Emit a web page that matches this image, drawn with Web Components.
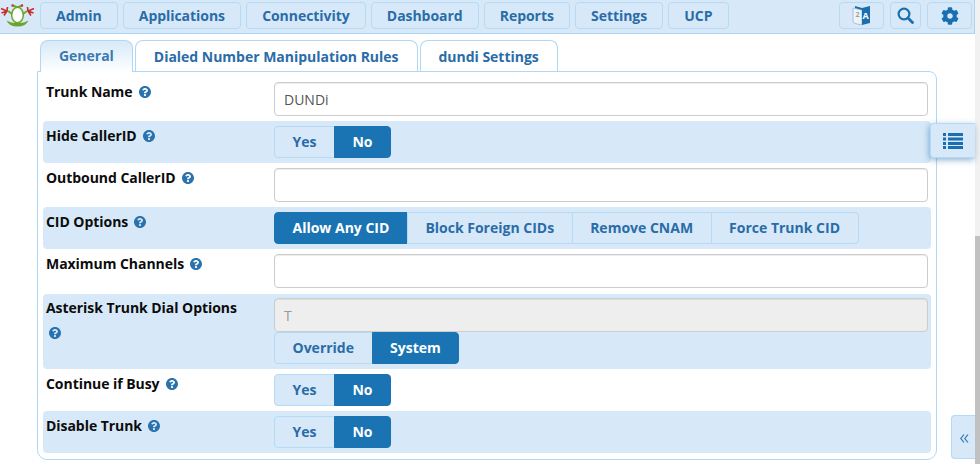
<!DOCTYPE html>
<html><head><meta charset="utf-8">
<style>
html,body{margin:0;padding:0;height:464px;overflow:hidden;background:#fff;font-family:"Open Sans",sans-serif}
</style></head><body>
<template id="t-page"><style>
:host{display:flex;height:464px;width:980px;position:relative}
.main{width:975px;flex:none;display:flex;flex-direction:column;position:relative}
.bar{width:5px;flex:none;background:#f1f1f1;display:flex;flex-direction:column}
.bar i{display:block;margin-top:236px;flex:1;background:#c1c1c1}
.content{padding:6px 38px 0 37px;display:flex;flex-direction:column}
</style><div class="main"><slot name="nav"></slot><div class="content"><slot></slot></div><slot name="over"></slot></div><div class="bar"><i></i></div></template>

<template id="t-nav"><style>
:host{display:flex;background:#d7e9f8;border-bottom:1px solid #a9d4f2;border-right:1px solid #a9d4f2;align-items:flex-start;padding-top:2px;height:31px}
.logo{width:40px;flex:none;height:28px;margin-top:-2px}
.l,.r{display:flex;gap:5px}
.sp{flex:1}
.r{margin-right:2px;gap:6px}
</style><div class="logo"><slot name="logo"></slot></div><div class="l"><slot></slot></div><div class="sp"></div><div class="r"><slot name="right"></slot></div></template>

<template id="t-navbtn"><style>
:host{display:flex;align-items:center;justify-content:center;box-sizing:border-box;height:27px;padding:0 15.1px;border:1px solid #b4daf5;border-radius:4px;background:#d7e9f8;color:#2a6ca8;font:700 14px/1 "Open Sans",sans-serif;letter-spacing:-.05px}
</style><slot></slot></template>

<template id="t-tabs"><style>
:host{display:flex;gap:2px;padding-left:3px;height:32px;position:relative;z-index:1;align-items:flex-start}
</style><slot></slot></template>

<template id="t-tab"><style>
:host{display:flex;align-items:center;justify-content:center;box-sizing:border-box;height:31px;padding:1px 18px 0;border:1px solid #b0d8f4;border-bottom:0;border-radius:8px 8px 0 0;background:#fff;color:#2a6ca8;font:700 14px/1 "Open Sans",sans-serif;letter-spacing:-.02px}
:host([active]){height:32px;background:linear-gradient(#d7e9f8,#fff);color:#3a7ab3;padding:0 18px 1px}
</style><slot></slot></template>

<template id="t-panel"><style>
:host{display:flex;flex-direction:column;box-sizing:border-box;border:1px solid #b0d8f4;border-radius:0 8px 10px 10px;padding:7px 5px 6px 5px;height:389px;margin-top:-1px;width:900px}
</style><slot></slot></template>

<template id="t-row"><style>
:host{display:grid;grid-template-columns:231px 654px;box-sizing:border-box;height:var(--h,42px);border-radius:4px;margin-bottom:var(--mb,0);color:#0c0c0c}
:host([shade]){background:#d7e9f8}
.lab{padding:var(--lt,5px) 0 0 3px;font:700 14px/20px "Open Sans",sans-serif;letter-spacing:-.05px;box-sizing:border-box}
.ctl{display:flex;flex-direction:column;align-items:flex-start;padding-top:var(--pt,5px)}
</style><div class="lab"><slot name="label"></slot></div><div class="ctl"><slot></slot></div></template>

<template id="t-help"><style>
:host{display:inline-block;width:12px;height:12px;margin-left:6px;vertical-align:-1px}
:host([block]){display:block;margin:9px 0 0 3px}
svg{display:block;width:12px;height:12px}
</style><svg viewBox="8 8 496 496"><path fill="#2a72ae" d="M504 256c0 136.997-111.043 248-248 248S8 392.997 8 256C8 119.083 119.043 8 256 8s248 111.083 248 248zM262.655 90c-54.497 0-89.255 22.957-116.549 63.758-3.536 5.286-2.353 12.415 2.715 16.258l34.699 26.31c5.205 3.947 12.621 3.008 16.665-2.122 17.864-22.658 30.113-35.797 57.303-35.797 20.429 0 45.698 13.148 45.698 32.958 0 14.976-12.363 22.667-32.534 33.976C247.128 238.528 216 254.941 216 296v4c0 6.627 5.373 12 12 12h56c6.627 0 12-5.373 12-12v-1.333c0-28.462 83.186-29.647 83.186-106.667 0-58.002-60.165-102-116.531-102zM256 338c-25.365 0-46 20.635-46 46 0 25.364 20.635 46 46 46s46-20.636 46-46c0-25.365-20.635-46-46-46z"/></svg></template>

<template id="t-input"><style>
:host{display:flex;align-items:center;box-sizing:border-box;width:654px;height:34px;border:1px solid #ccc;border-radius:4px;background:#fff;padding:1px 9px 0;font:400 14px/1 "Open Sans",sans-serif;color:#555;box-shadow:inset 0 1px 1px rgba(0,0,0,.075)}
:host([disabled]){background:#eee;color:#999}
</style><slot></slot></template>

<template id="t-seg"><style>
:host{display:inline-flex;height:32px}
</style><slot></slot></template>

<template id="t-opt"><style>
:host{display:flex;align-items:center;justify-content:center;box-sizing:border-box;height:32px;padding:0 17.5px;border:1px solid #b4daf5;margin-left:-1px;background:#d7e9f8;color:#2a6ca8;font:700 14px/1 "Open Sans",sans-serif}
:host(:first-child){margin-left:0;border-radius:4px 0 0 4px}
:host(:last-child){border-radius:0 4px 4px 0}
:host([on]){background:#1a73b3;border-color:#1a73b3;color:#fff}
</style><slot></slot></template>

<template id="t-side"><style>
:host{position:absolute;right:0;top:123px;width:45px;height:35px;box-sizing:border-box;border:1px solid #b4daf5;border-right:0;border-radius:4px 0 0 4px;background:#d7e9f8;display:flex;align-items:center;justify-content:center;box-shadow:-1px 2px 6px rgba(42,114,174,.55)}
</style><slot></slot></template>

<template id="t-collapse"><style>
:host{position:absolute;right:0;top:415px;width:24px;height:44px;box-sizing:border-box;border:1px solid #b4daf5;border-right:0;border-radius:4px 0 0 4px;background:#d7e9f8;display:flex;align-items:center;justify-content:center;color:#2a72ae;padding:2px 0 0 2px}
</style><slot></slot></template>

<x-page>
  <x-nav slot="nav">
    <svg slot="logo" width="36" height="28" viewBox="0 0 36 28">
      <path d="M6.500 20.500Q12 24 17.500 22.500Q23 24 28.500 20.500Q26 26.500 17.500 26.500Q9 26.500 6.500 20.500Z" fill="#6aa52c"/>
      <path d="M13 5.500L16 7L19 7L22 5.500" fill="none" stroke="#6aa52c" stroke-width="2"/>
      <ellipse cx="17.500" cy="15" rx="5.800" ry="7.800" fill="#fff" stroke="#6aa52c" stroke-width="1.500"/>
      <path d="M12 14L8 11M23 14L27 11" stroke="#6aa52c" stroke-width="1.600"/>
      <path d="M1 8.500L7 11L4 15.500M7.500 7L7 11L1.500 13M34 8.500L28 11L31 15.500M27.500 7L28 11L33.500 13" stroke="#cc2a2a" stroke-width="1.600" fill="none"/>
      <circle cx="12.500" cy="5.500" r="1.200" fill="#c33"/><circle cx="22" cy="5.500" r="1.200" fill="#c33"/>
    </svg>
    <x-navbtn>Admin</x-navbtn><x-navbtn>Applications</x-navbtn><x-navbtn>Connectivity</x-navbtn><x-navbtn>Dashboard</x-navbtn><x-navbtn>Reports</x-navbtn><x-navbtn>Settings</x-navbtn><x-navbtn>UCP</x-navbtn>
    <x-navbtn slot="right" style="width:45px;padding:0">
      <svg width="19" height="21" viewBox="0 0 19 21"><path d="M1 3L10 5V20L3 18.500Q1 18 1 16Z" fill="#eef3f8" stroke="#9fb4c8" stroke-width=".8"/><path d="M3 1L10 3L18 1V18L10 20V5L3 3Z" fill="#1a6fb0"/><text x="10.500" y="14" font-family="Open Sans" font-weight="700" font-size="9" fill="#fff">A</text><text x="3.500" y="12" font-family="Open Sans" font-size="7" fill="#8aa">2</text></svg>
    </x-navbtn>
    <x-navbtn slot="right" style="width:31px;padding:0">
      <svg width="17" height="17" viewBox="0 0 17 17"><circle cx="7" cy="7" r="5.400" fill="none" stroke="#1a6fb0" stroke-width="2.200"/><path d="M11 11L15.500 15.500" stroke="#1a6fb0" stroke-width="2.800" stroke-linecap="round"/></svg>
    </x-navbtn>
    <x-navbtn slot="right" style="width:45px;padding:0">
      <svg width="18" height="18" viewBox="0 0 512 512"><path fill="#1a6fb0" d="M487.4 315.7l-42.6-24.6c4.3-23.2 4.3-47 0-70.2l42.6-24.6c4.9-2.8 7.1-8.6 5.5-14-11.1-35.6-30-67.8-54.7-94.6-3.8-4.1-10-5.1-14.8-2.3L380.8 110c-17.9-15.4-38.5-27.3-60.8-35.1V25.8c0-5.6-3.9-10.5-9.4-11.7-36.7-8.2-74.3-7.8-109.2 0-5.5 1.2-9.4 6.1-9.4 11.7V75c-22.2 7.9-42.8 19.8-60.8 35.1L88.7 85.5c-4.9-2.8-11-1.9-14.8 2.3-24.7 26.7-43.6 58.9-54.7 94.6-1.7 5.4.6 11.2 5.5 14L67.3 221c-4.3 23.2-4.3 47 0 70.2l-42.6 24.6c-4.9 2.8-7.1 8.6-5.5 14 11.1 35.6 30 67.8 54.7 94.6 3.8 4.1 10 5.1 14.8 2.3l42.6-24.6c17.9 15.4 38.5 27.3 60.8 35.1v49.2c0 5.6 3.9 10.5 9.4 11.7 36.7 8.2 74.3 7.8 109.2 0 5.5-1.2 9.4-6.1 9.4-11.7v-49.2c22.2-7.9 42.8-19.8 60.8-35.1l42.6 24.6c4.9 2.8 11 1.9 14.8-2.3 24.7-26.7 43.6-58.9 54.7-94.6 1.5-5.5-.7-11.3-5.6-14.1zM256 336c-44.1 0-80-35.9-80-80s35.9-80 80-80 80 35.9 80 80-35.9 80-80 80z"/></svg>
    </x-navbtn>
  </x-nav>
  <x-tabs><x-tab active>General</x-tab><x-tab>Dialed Number Manipulation Rules</x-tab><x-tab>dundi Settings</x-tab></x-tabs>
  <x-panel>
    <x-row style="--lt:3px;--pt:3px"><span slot="label">Trunk Name<x-help></x-help></span><x-input>DUNDi</x-input></x-row>
    <x-row shade style="--mb:2px"><span slot="label">Hide CallerID<x-help></x-help></span><x-seg><x-opt>Yes</x-opt><x-opt on>No</x-opt></x-seg></x-row>
    <x-row style="--lt:3px;--pt:3px"><span slot="label">Outbound CallerID<x-help></x-help></span><x-input></x-input></x-row>
    <x-row shade><span slot="label">CID Options<x-help></x-help></span><x-seg><x-opt on>Allow Any CID</x-opt><x-opt>Block Foreign CIDs</x-opt><x-opt>Remove CNAM</x-opt><x-opt>Force Trunk CID</x-opt></x-seg></x-row>
    <x-row style="--h:45px"><span slot="label">Maximum Channels<x-help></x-help></span><x-input></x-input></x-row>
    <x-row shade style="--h:75px;--pt:4px;--lt:4px"><span slot="label">Asterisk Trunk Dial Options<x-help block></x-help></span><x-input disabled>T</x-input><x-seg><x-opt>Override</x-opt><x-opt on>System</x-opt></x-seg></x-row>
    <x-row><span slot="label">Continue if Busy<x-help></x-help></span><x-seg><x-opt>Yes</x-opt><x-opt on>No</x-opt></x-seg></x-row>
    <x-row shade><span slot="label">Disable Trunk<x-help></x-help></span><x-seg><x-opt>Yes</x-opt><x-opt on>No</x-opt></x-seg></x-row>
  </x-panel>
  <x-side slot="over"><svg width="20" height="16" viewBox="0 0 20 16"><path fill="#1a6fb0" d="M0 0h3v3H0zM5 0h15v3H5zM0 4.500h3v3H0zM5 4.500h15v3H5zM0 9h3v3H0zM5 9h15v3H5zM0 13h3v3H0zM5 13h15v3H5z"/></svg></x-side>
  <x-collapse slot="over"><svg width="9" height="9" viewBox="0 0 9 9"><path d="M4 .5L.8 4.500 4 8.500M8 .5L4.800 4.500 8 8.500" fill="none" stroke="#2a72ae" stroke-width="1.200"/></svg></x-collapse>
</x-page>
<script>
for (const n of ['page','nav','navbtn','tabs','tab','panel','row','help','input','seg','opt','side','collapse']) {
  customElements.define('x-'+n, class extends HTMLElement {
    constructor(){super();this.attachShadow({mode:'open'}).appendChild(document.getElementById('t-'+n).content.cloneNode(true));}
  });
}
</script>
</body></html>
